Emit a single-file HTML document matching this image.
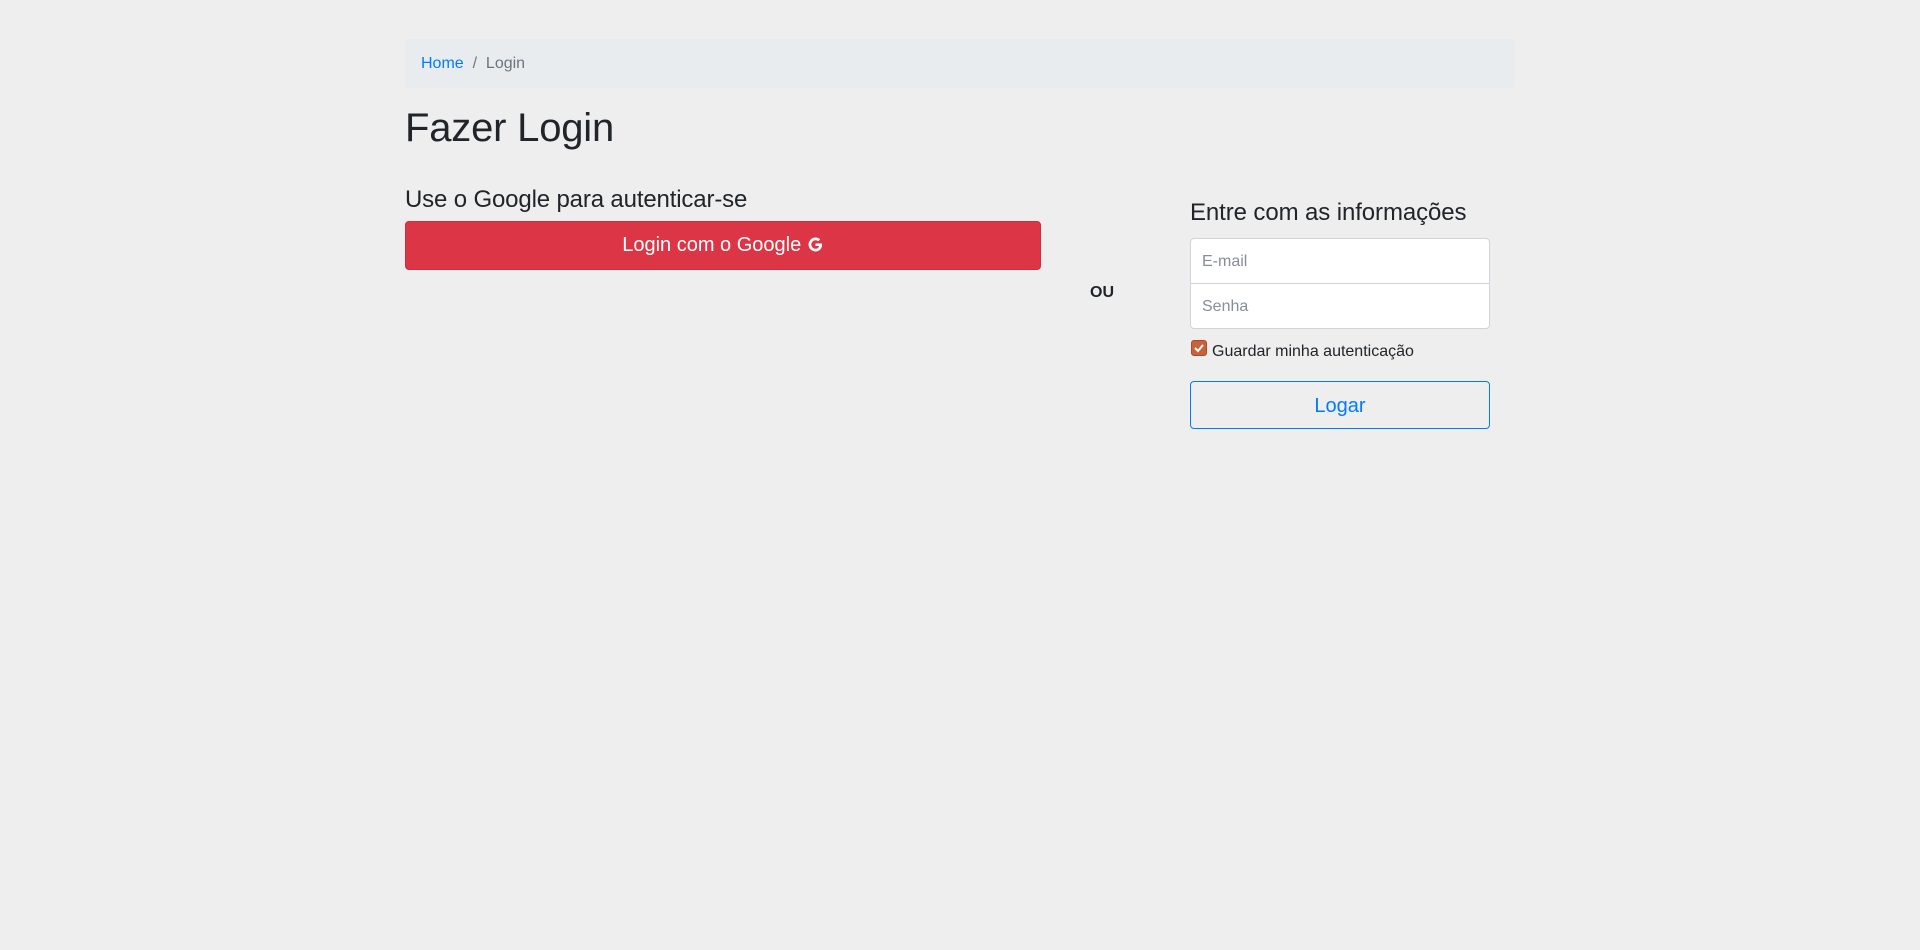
<!DOCTYPE html>
<html><head><meta charset="utf-8"><style>
body{margin:0;background:#eee;font-family:"Liberation Sans",Arial,sans-serif;color:#212529;width:1920px;height:950px;position:relative;overflow:hidden}
.a{position:absolute}
.bc{left:405px;top:39px;width:1110px;height:49px;background:#e9ecef;border-radius:4px;font-size:16px;line-height:50px}
.bc span{margin-left:16px;color:#007bff}
.bc i{font-style:normal;color:#6c757d}
h1{margin:0;font-weight:400;font-size:40px;left:405px;top:106px;letter-spacing:-0.2px}
.sub{left:405px;top:186px;font-size:24px;letter-spacing:-0.15px}
.gb{left:405px;top:221px;width:634px;height:47px;background:#dc3545;border:1px solid #d42c3c;border-radius:4px;color:#fff;font-size:20px;text-align:center;line-height:47px}
.ou{left:1090px;top:284px;font-weight:700;font-size:16px}
.h2{left:1190px;top:199px;font-size:24px;letter-spacing:-0.1px}
.inp{left:1190px;width:298px;height:44px;background:#fff;border:1px solid #ced4da;font-size:16px;color:#868e96;line-height:46px;box-sizing:content-box}
.inp span{margin-left:11px}
.chk{left:1191px;top:340px;width:14px;height:14px;background:#c8623b;border:1px solid #a84e2c;border-radius:3px}
.lab{left:1212px;top:343px;font-size:16px}
.lb{left:1190px;top:381px;width:298px;height:46px;border:1px solid #007bff;border-radius:4px;color:#007bff;font-size:20px;text-align:center;line-height:48px}
</style></head><body>
<div class="a bc"><span>Home</span> <i>&nbsp;/&nbsp; Login</i></div>
<h1 class="a">Fazer Login</h1>
<div class="a sub">Use o Google para autenticar-se</div>
<div class="a gb">Login com o Google <svg width="17" height="17" viewBox="0 0 24 24" style="vertical-align:-2px"><path d="M21 10.5H12v3.6h5.1c-.5 2.4-2.6 3.9-5.1 3.9a6 6 0 1 1 3.9-10.6l2.7-2.6A9.8 9.8 0 0 0 12 2.2a9.8 9.8 0 1 0 0 19.6c5.3 0 9.3-3.7 9.3-9.6 0-.6 0-1.1-.3-1.7z" fill="#fff"/></svg></div>
<div class="a ou">OU</div>
<div class="a h2">Entre com as informações</div>
<div class="a inp" style="top:238px;border-radius:4px 4px 0 0"><span>E-mail</span></div>
<div class="a inp" style="top:283px;border-radius:0 0 4px 4px"><span>Senha</span></div>
<div class="a chk"><svg width="14" height="14" viewBox="0 0 14 14"><path d="M3 7l3 3 5-6" stroke="#fff" stroke-width="2" fill="none"/></svg></div>
<div class="a lab">Guardar minha autenticação</div>
<div class="a lb">Logar</div>
</body></html>
